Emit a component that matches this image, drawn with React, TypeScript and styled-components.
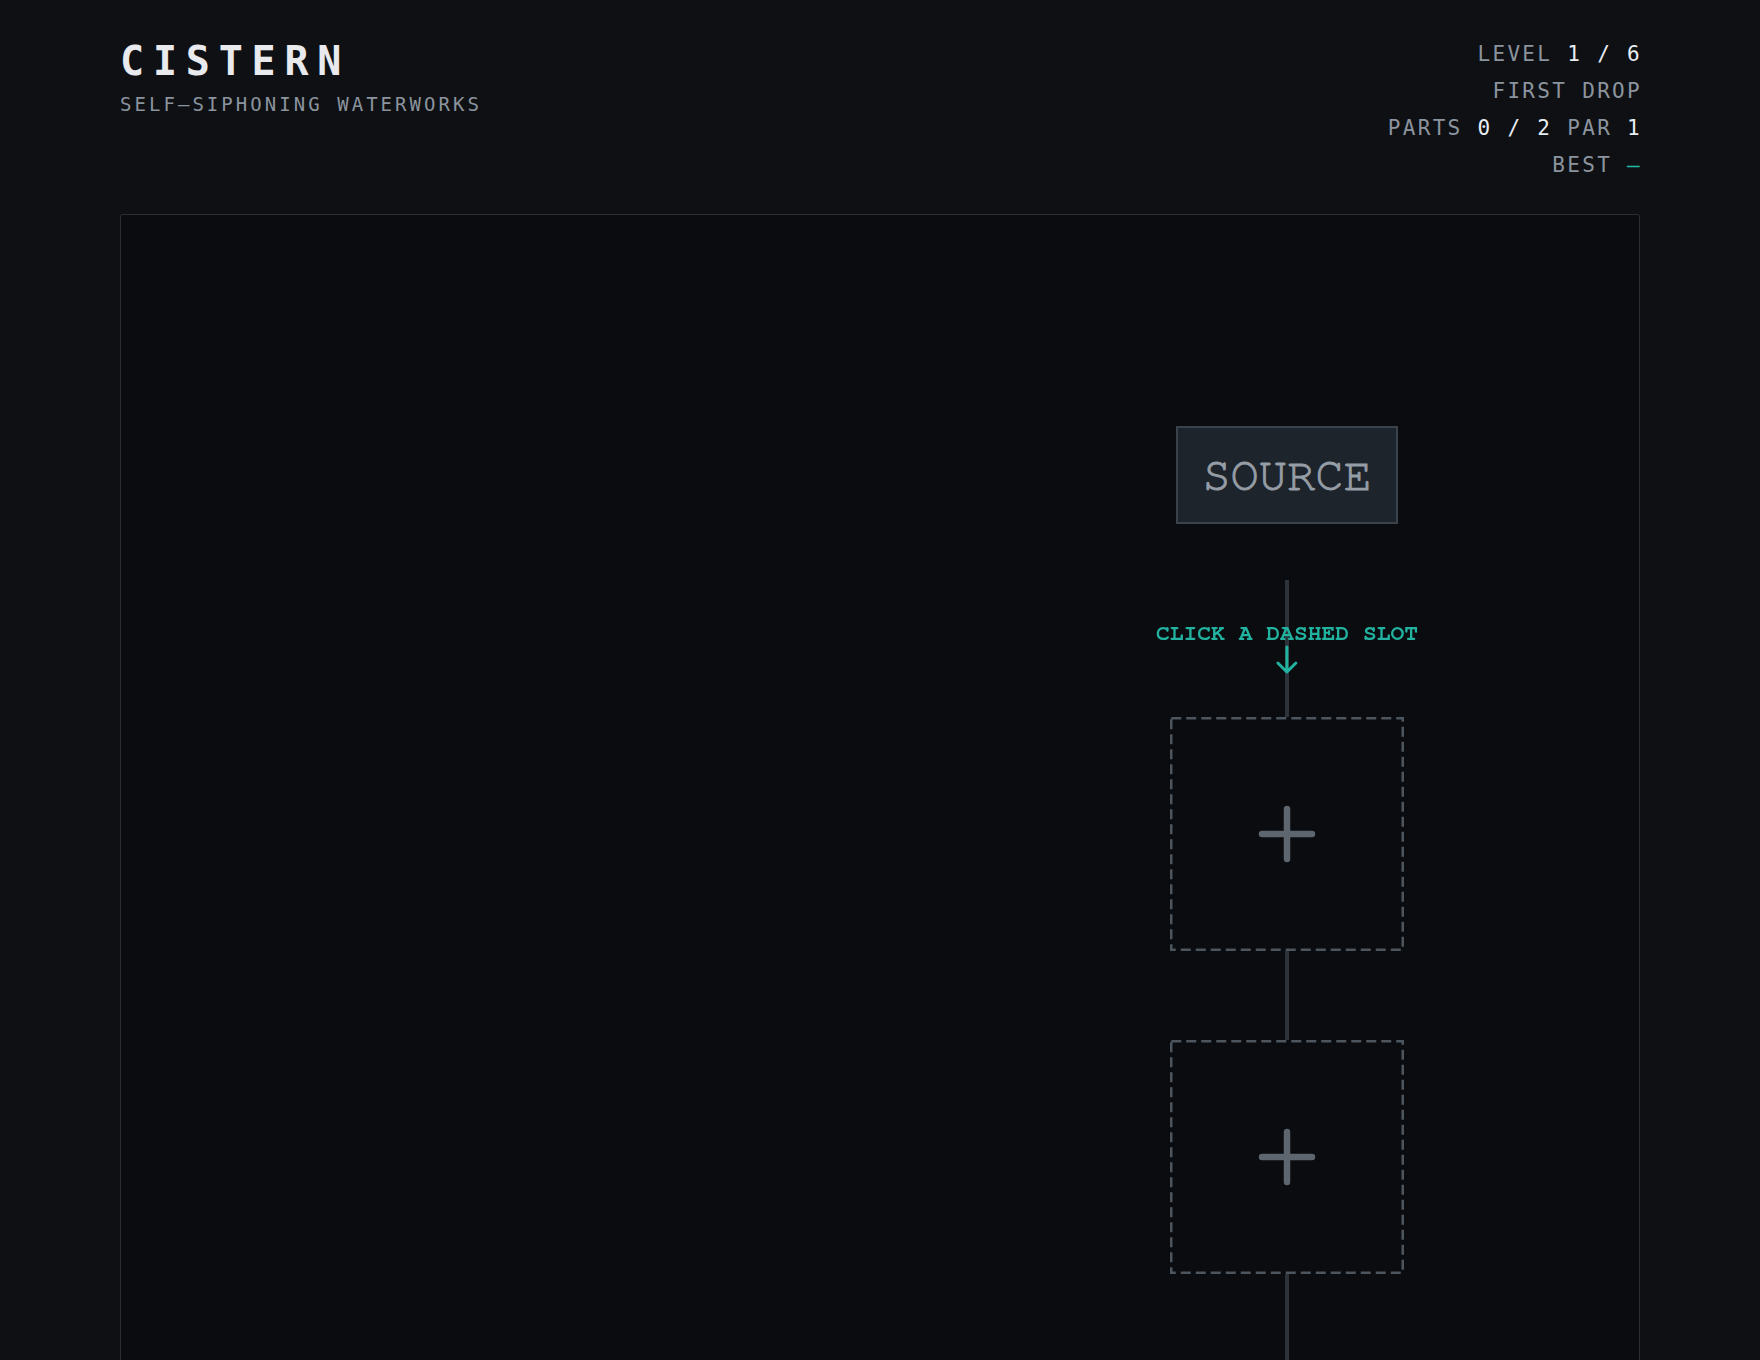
import React from 'react';
import styled, { createGlobalStyle } from 'styled-components';

const GlobalStyle = createGlobalStyle`
  html, body {
    margin: 0;
    padding: 0;
    background: #0e1014;
  }
  body {
    font-family: "DejaVu Sans Mono", monospace;
    color: #e6e8eb;
  }
`;

const Page = styled.div`
  padding: 34px 120px 0;
  box-sizing: border-box;
  width: 1760px;
`;

const Header = styled.header`
  display: flex;
  justify-content: space-between;
  align-items: flex-start;
  height: 180px;
`;

const Brand = styled.div`
  display: flex;
  flex-direction: column;
  gap: 12px;
  padding-top: 7px;
`;

const Title = styled.h1`
  margin: 0;
  font-size: 40px;
  line-height: 1;
  font-weight: 700;
  letter-spacing: 0.22em;
  color: #e8eaed;
`;

const Subtitle = styled.div`
  font-size: 19px;
  line-height: 1.2;
  letter-spacing: 0.16em;
  color: #8b949e;
`;

const Stats = styled.div`
  display: flex;
  flex-direction: column;
  align-items: flex-end;
  padding-top: 2px;
  font-size: 21px;
  line-height: 37px;
  letter-spacing: 0.11em;
  color: #8b949e;
  margin-right: -2px;
`;

const Value = styled.span<{ $accent?: boolean }>`
  color: ${p => (p.$accent ? '#22b8a4' : '#e6edf3')};
`;

const Board = styled.main`
  position: relative;
  height: 1200px;
  background: #0a0c0f;
  border: 1px solid #2a2f36;
  border-radius: 3px;
  overflow: hidden;
`;

const Pipeline = styled.div`
  position: absolute;
  top: 211px;
  left: 1166px;
  transform: translateX(-50%);
  display: flex;
  flex-direction: column;
  align-items: center;
  filter: blur(0.6px);
  font-family: FreeMono, "Liberation Mono", monospace;
`;

const Source = styled.div`
  width: 222px;
  height: 98px;
  box-sizing: border-box;
  display: flex;
  align-items: center;
  justify-content: center;
  background: #1e242b;
  border: 2px solid #3a424b;
  color: #959da6;
  font-size: 47px;
  font-weight: 400;
  -webkit-text-stroke: 0.9px #959da6;
  margin-bottom: 56px;
`;

const Pipe = styled.div<{ $length: number }>`
  position: relative;
  width: 4px;
  height: ${p => p.$length}px;
  background: #2d333a;
`;

const Hint = styled.div`
  position: absolute;
  top: 43px;
  left: 50%;
  transform: translateX(-50%);
  display: flex;
  flex-direction: column;
  align-items: center;
  white-space: nowrap;
  color: #22b3a0;
  font-size: 23px;
  font-weight: 700;
  line-height: 22px;
`;

const Slot = styled.button`
  width: 234px;
  height: 234px;
  box-sizing: border-box;
  display: flex;
  align-items: center;
  justify-content: center;
  padding: 0;
  background: transparent;
  border: none;
  cursor: pointer;
  position: relative;
`;

function DashedFrame() {
  return (
    <svg width="234" height="234" viewBox="0 0 234 234" style={{ position: 'absolute', inset: 0 }}>
      <rect
        x="1.25"
        y="1.25"
        width="231.5"
        height="231.5"
        fill="none"
        stroke="#4d555e"
        strokeWidth="2.5"
        strokeDasharray="10 5"
      />
    </svg>
  );
}

function PlusIcon() {
  return (
    <svg width="58" height="58" viewBox="0 0 58 58">
      <path d="M29 4 V54 M4 29 H54" stroke="#5d656e" strokeWidth="6.5" strokeLinecap="round" />
    </svg>
  );
}

function ArrowDown() {
  return (
    <svg width="24" height="30" viewBox="0 0 24 30">
      <path d="M12 2 V27 M3 18 L12 27 L21 18" stroke="#22b3a0" strokeWidth="3" fill="none" strokeLinecap="round" strokeLinejoin="round" />
    </svg>
  );
}

export default function App() {
  return (
    <>
      <GlobalStyle />
      <Page>
        <Header>
          <Brand>
            <Title>CISTERN</Title>
            <Subtitle>SELF–SIPHONING WATERWORKS</Subtitle>
          </Brand>
          <Stats>
            <div>
              LEVEL <Value>1 / 6</Value>
            </div>
            <div>FIRST DROP</div>
            <div>
              PARTS <Value>0 / 2</Value> PAR <Value>1</Value>
            </div>
            <div>
              BEST <Value $accent>—</Value>
            </div>
          </Stats>
        </Header>
        <Board>
          <Pipeline>
            <Source>SOURCE</Source>
            <Pipe $length={137}>
              <Hint>
                CLICK A DASHED SLOT
                <ArrowDown />
              </Hint>
            </Pipe>
            <Slot>
              <DashedFrame />
              <PlusIcon />
            </Slot>
            <Pipe $length={89} />
            <Slot>
              <DashedFrame />
              <PlusIcon />
            </Slot>
            <Pipe $length={400} />
          </Pipeline>
        </Board>
      </Page>
    </>
  );
}
